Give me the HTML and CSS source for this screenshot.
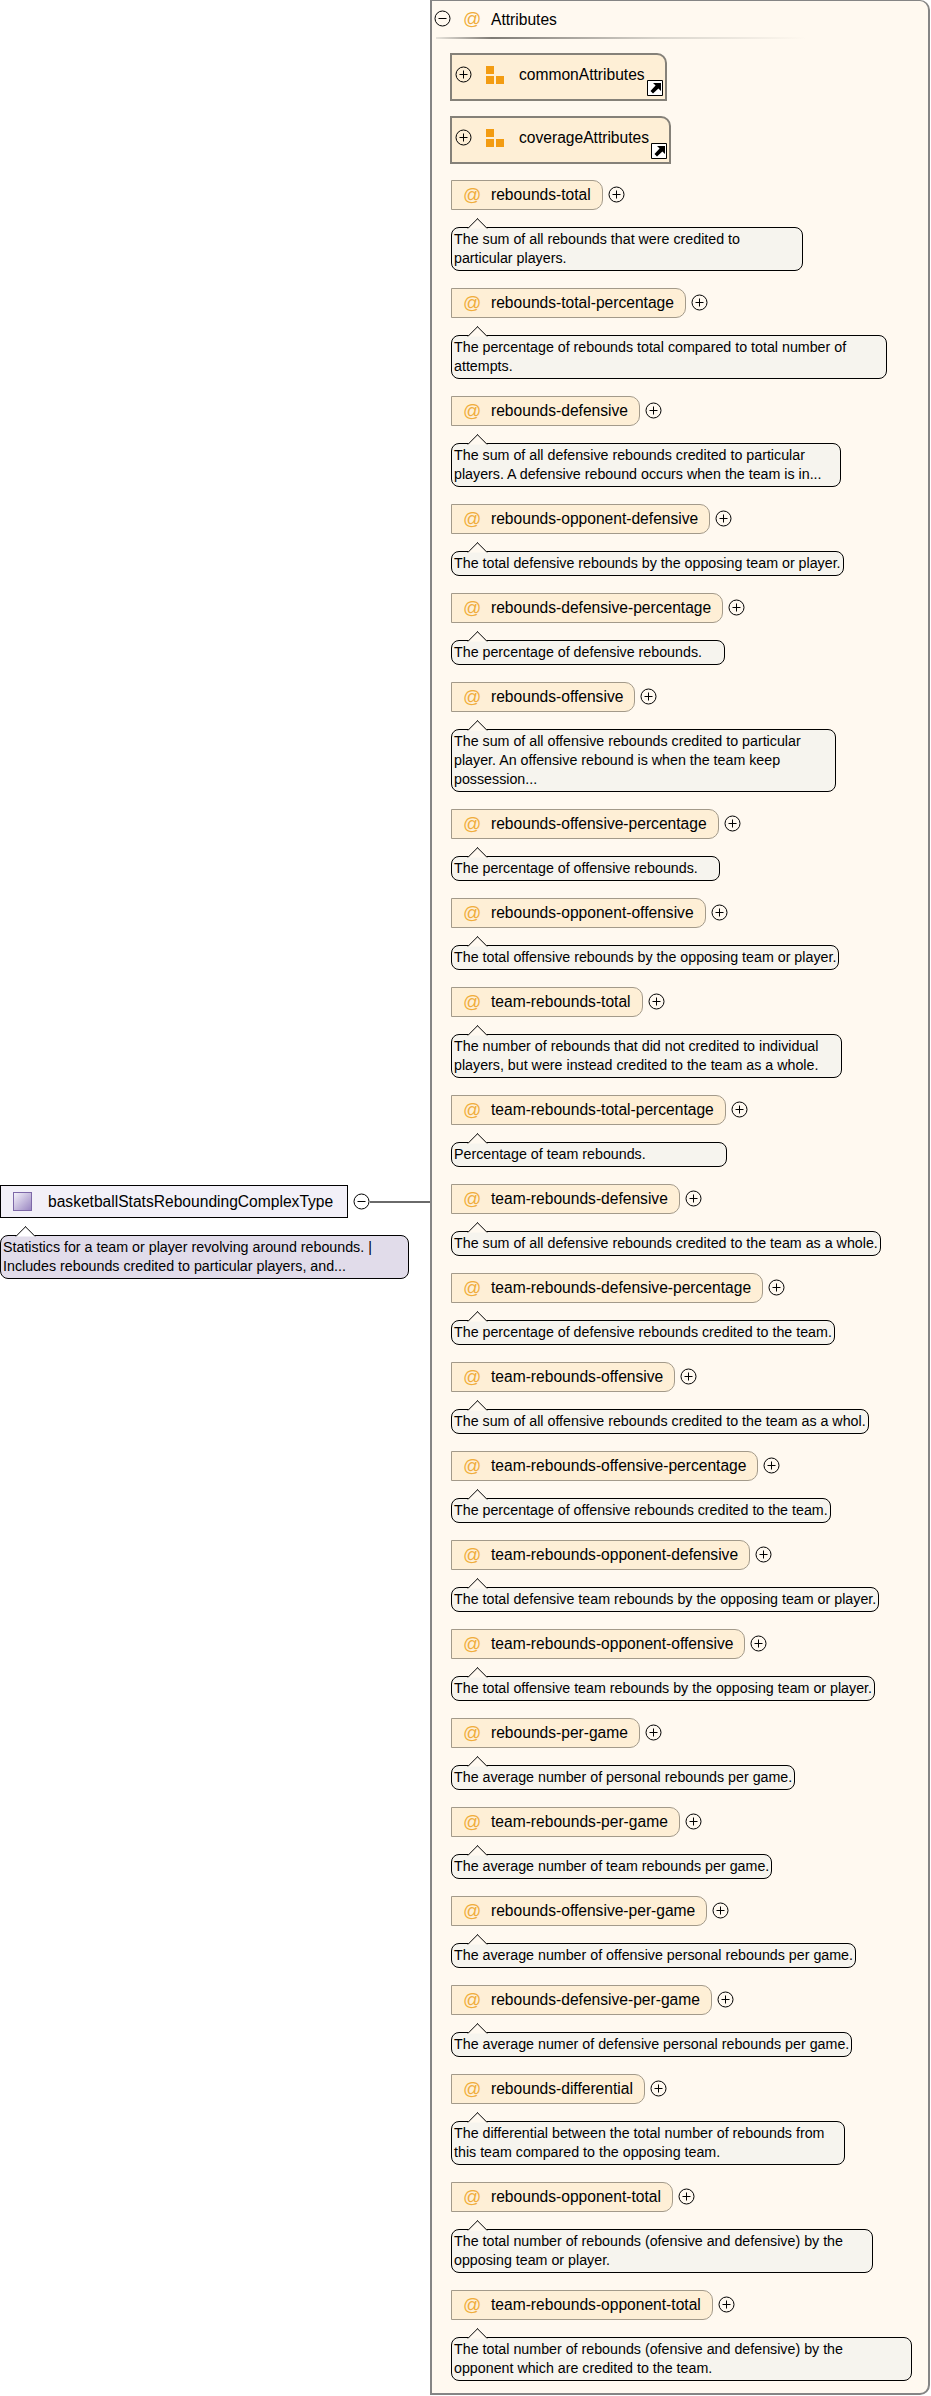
FILE: index.html
```html
<!DOCTYPE html>
<html lang="en">
<head>
<meta charset="utf-8">
<title>basketballStatsReboundingComplexType</title>
<link rel="stylesheet" href="styles.css">
</head>
<body>
<svg class="defs" width="0" height="0" aria-hidden="true">
  <symbol id="plus" viewBox="0 0 17 17"><circle cx="8.5" cy="8.5" r="7.5" fill="#fff" fill-opacity="0" stroke="#000"/><path d="M4.5 8.5h8M8.5 4.5v8" stroke="#000" fill="none"/></symbol>
  <symbol id="minus" viewBox="0 0 17 17"><circle cx="8.5" cy="8.5" r="7.5" fill="#fff" fill-opacity="0" stroke="#000"/><path d="M4.5 8.5h8" stroke="#000" fill="none"/></symbol>
  <symbol id="group" viewBox="0 0 18 18"><path d="M0 0h8v8H0zM0 10h8v8H0zM10 10h8v8h-8z" fill="#f39c12"/></symbol>
  <symbol id="link" viewBox="0 0 16 16"><path d="M.5.5h15v15H.5z" fill="#fff" stroke="#000"/><path d="M6 3h8v8l-2.6-2.6L6 13.5 3.5 11l5.1-5.4z" fill="#000"/></symbol>
</svg>
<main class="diagram">
  <section class="type">
    <div class="type-row">
      <div class="type-box"><span class="type-icon"></span><span class="type-name">basketballStatsReboundingComplexType</span></div>
      <svg class="toggle"><use href="#minus"/></svg>
      <span class="connector"></span>
    </div>
    <p class="note note-type">Statistics for a team or player revolving around rebounds. | Includes rebounds credited to particular players, and...</p>
  </section>
  <section class="panel">
    <header class="panel-head">
      <svg class="toggle"><use href="#minus"/></svg>
      <span class="at">@</span>
      <span class="panel-title">Attributes</span>
    </header>
    <div class="groups">
      <div class="group"><svg class="toggle"><use href="#plus"/></svg><svg class="group-icon"><use href="#group"/></svg><span>commonAttributes</span><svg class="link"><use href="#link"/></svg></div>
      <div class="group"><svg class="toggle"><use href="#plus"/></svg><svg class="group-icon"><use href="#group"/></svg><span>coverageAttributes</span><svg class="link"><use href="#link"/></svg></div>
    </div>
    <article class="attr"><div class="attr-row"><div class="attr-name"><span class="at">@</span><span>rebounds-total</span></div><svg class="toggle"><use href="#plus"/></svg></div><p class="note w-352">The sum of all rebounds that were credited to particular players.</p></article>
    <article class="attr"><div class="attr-row"><div class="attr-name"><span class="at">@</span><span>rebounds-total-percentage</span></div><svg class="toggle"><use href="#plus"/></svg></div><p class="note w-436">The percentage of rebounds total compared to total number of attempts.</p></article>
    <article class="attr"><div class="attr-row"><div class="attr-name"><span class="at">@</span><span>rebounds-defensive</span></div><svg class="toggle"><use href="#plus"/></svg></div><p class="note w-390">The sum of all defensive rebounds credited to particular players. A defensive rebound occurs when the team is in...</p></article>
    <article class="attr"><div class="attr-row"><div class="attr-name"><span class="at">@</span><span>rebounds-opponent-defensive</span></div><svg class="toggle"><use href="#plus"/></svg></div><p class="note">The total defensive rebounds by the opposing team or player.</p></article>
    <article class="attr"><div class="attr-row"><div class="attr-name"><span class="at">@</span><span>rebounds-defensive-percentage</span></div><svg class="toggle"><use href="#plus"/></svg></div><p class="note w-274">The percentage of defensive rebounds.</p></article>
    <article class="attr"><div class="attr-row"><div class="attr-name"><span class="at">@</span><span>rebounds-offensive</span></div><svg class="toggle"><use href="#plus"/></svg></div><p class="note w-385">The sum of all offensive rebounds credited to particular player. An offensive rebound is when the team keep possession...</p></article>
    <article class="attr"><div class="attr-row"><div class="attr-name"><span class="at">@</span><span>rebounds-offensive-percentage</span></div><svg class="toggle"><use href="#plus"/></svg></div><p class="note w-269">The percentage of offensive rebounds.</p></article>
    <article class="attr"><div class="attr-row"><div class="attr-name"><span class="at">@</span><span>rebounds-opponent-offensive</span></div><svg class="toggle"><use href="#plus"/></svg></div><p class="note">The total offensive rebounds by the opposing team or player.</p></article>
    <article class="attr"><div class="attr-row"><div class="attr-name"><span class="at">@</span><span>team-rebounds-total</span></div><svg class="toggle"><use href="#plus"/></svg></div><p class="note w-391">The number of rebounds that did not credited to individual players, but were instead credited to the team as a whole.</p></article>
    <article class="attr"><div class="attr-row"><div class="attr-name"><span class="at">@</span><span>team-rebounds-total-percentage</span></div><svg class="toggle"><use href="#plus"/></svg></div><p class="note w-276">Percentage of team rebounds.</p></article>
    <article class="attr"><div class="attr-row"><div class="attr-name"><span class="at">@</span><span>team-rebounds-defensive</span></div><svg class="toggle"><use href="#plus"/></svg></div><p class="note">The sum of all defensive rebounds credited to the team as a whole.</p></article>
    <article class="attr"><div class="attr-row"><div class="attr-name"><span class="at">@</span><span>team-rebounds-defensive-percentage</span></div><svg class="toggle"><use href="#plus"/></svg></div><p class="note">The percentage of defensive rebounds credited to the team.</p></article>
    <article class="attr"><div class="attr-row"><div class="attr-name"><span class="at">@</span><span>team-rebounds-offensive</span></div><svg class="toggle"><use href="#plus"/></svg></div><p class="note">The sum of all offensive rebounds credited to the team as a whol.</p></article>
    <article class="attr"><div class="attr-row"><div class="attr-name"><span class="at">@</span><span>team-rebounds-offensive-percentage</span></div><svg class="toggle"><use href="#plus"/></svg></div><p class="note">The percentage of offensive rebounds credited to the team.</p></article>
    <article class="attr"><div class="attr-row"><div class="attr-name"><span class="at">@</span><span>team-rebounds-opponent-defensive</span></div><svg class="toggle"><use href="#plus"/></svg></div><p class="note">The total defensive team rebounds by the opposing team or player.</p></article>
    <article class="attr"><div class="attr-row"><div class="attr-name"><span class="at">@</span><span>team-rebounds-opponent-offensive</span></div><svg class="toggle"><use href="#plus"/></svg></div><p class="note">The total offensive team rebounds by the opposing team or player.</p></article>
    <article class="attr"><div class="attr-row"><div class="attr-name"><span class="at">@</span><span>rebounds-per-game</span></div><svg class="toggle"><use href="#plus"/></svg></div><p class="note">The average number of personal rebounds per game.</p></article>
    <article class="attr"><div class="attr-row"><div class="attr-name"><span class="at">@</span><span>team-rebounds-per-game</span></div><svg class="toggle"><use href="#plus"/></svg></div><p class="note">The average number of team rebounds per game.</p></article>
    <article class="attr"><div class="attr-row"><div class="attr-name"><span class="at">@</span><span>rebounds-offensive-per-game</span></div><svg class="toggle"><use href="#plus"/></svg></div><p class="note">The average number of offensive personal rebounds per game.</p></article>
    <article class="attr"><div class="attr-row"><div class="attr-name"><span class="at">@</span><span>rebounds-defensive-per-game</span></div><svg class="toggle"><use href="#plus"/></svg></div><p class="note">The average numer of defensive personal rebounds per game.</p></article>
    <article class="attr"><div class="attr-row"><div class="attr-name"><span class="at">@</span><span>rebounds-differential</span></div><svg class="toggle"><use href="#plus"/></svg></div><p class="note w-394">The differential between the total number of rebounds from this team compared to the opposing team.</p></article>
    <article class="attr"><div class="attr-row"><div class="attr-name"><span class="at">@</span><span>rebounds-opponent-total</span></div><svg class="toggle"><use href="#plus"/></svg></div><p class="note w-422">The total number of rebounds (ofensive and defensive) by the opposing team or player.</p></article>
    <article class="attr"><div class="attr-row"><div class="attr-name"><span class="at">@</span><span>team-rebounds-opponent-total</span></div><svg class="toggle"><use href="#plus"/></svg></div><p class="note w-461">The total number of rebounds (ofensive and defensive) by the<br>opponent which are credited to the team.</p></article>
  </section>
</main>
</body>
</html>
```
FILE: styles.css
```css
html, body { margin: 0; padding: 0; background: #fff; }
body {
  width: 931px;
  height: 2396px;
  overflow: hidden;
  font-family: "Liberation Sans", Arial, sans-serif;
  color: #000;
}
.defs { position: absolute; }
.diagram { display: flex; align-items: flex-start; height: 2396px; }

.type { width: 430px; flex: none; padding-top: 1185px; box-sizing: border-box; }
.type-row { display: flex; align-items: center; }
.type-box {
  display: flex;
  align-items: center;
  box-sizing: border-box;
  width: 348px;
  height: 33px;
  padding-left: 12px;
  background: #f2f0f8;
  border: 1px solid #000;
  font-size: 15.6px;
}
.type-icon {
  width: 17px;
  height: 17px;
  margin-right: 16px;
  border: 1px solid #7d68a8;
  background: linear-gradient(135deg, #f4f2fa, #9a87c2);
}
.toggle { width: 17px; height: 17px; flex: none; display: block; }
.type-row .toggle { margin-left: 5px; }
.connector { flex: 1; height: 2px; background: #6a6a6a; }

.note {
  position: relative;
  box-sizing: border-box;
  width: fit-content;
  margin: 17px 0 0;
  padding: 2px;
  background: #f6f4ee;
  border: 1px solid #000;
  border-radius: 8px;
  font-size: 14.25px;
  line-height: 19px;
}
.note::before {
  content: "";
  position: absolute;
  left: 17.5px;
  top: -7.5px;
  width: 15px;
  height: 15px;
  box-sizing: border-box;
  background: #fff9f0;
  border-left: 1px solid #000;
  border-top: 1px solid #000;
  transform: rotate(45deg);
  clip-path: polygon(0 0, 100% 0, 0 100%);
}
.note-type { width: 409px; background: #e1dcea; }
.note-type::before { background: #fff; left: 17px; }
.w-352 { width: 352px; }
.w-436 { width: 436px; }
.w-390 { width: 390px; }
.w-274 { width: 274px; }
.w-385 { width: 385px; }
.w-269 { width: 269px; }
.w-391 { width: 391px; }
.w-276 { width: 276px; }
.w-394 { width: 394px; }
.w-422 { width: 422px; }
.w-461 { width: 461px; }

.panel {
  box-sizing: border-box;
  width: 500px;
  height: 2395px;
  flex: none;
  padding: 0 0 0 19px;
  background: #fff9f0;
  border: 2px solid #858585;
  border-top-width: 1px;
  border-radius: 0 10px 10px 0;
  font-size: 15.6px;
}
.at { color: #f0ad3c; font-size: 18px; width: 28px; flex: none; }
.panel-head {
  position: relative;
  display: flex;
  align-items: center;
  height: 37px;
  margin-left: -17px;
}
.panel-head .toggle { margin: 0 12px 2px 0; }
.panel-head::after {
  content: "";
  position: absolute;
  left: 2px;
  top: 36px;
  width: 370px;
  height: 2px;
  background: linear-gradient(90deg, #e8e4dc, #7f7b75 15%, #d8d4cc 60%, #fff9f0);
}

.groups { display: flex; flex-direction: column; align-items: flex-start; gap: 15px; padding-top: 15px; margin-left: -1px; }
.group {
  position: relative;
  display: flex;
  align-items: center;
  box-sizing: border-box;
  height: 48px;
  padding: 0 20px 5px 3px;
  background: #feefd6;
  border: 2px solid #858179;
  border-radius: 0 10px 0 0;
}
.group-icon { width: 18px; height: 18px; margin: 0 15px 0 14px; }
.link { position: absolute; right: 2px; bottom: 3px; width: 16px; height: 16px; }

.attr { margin-top: 16px; padding-bottom: 1px; }
.attr-row { display: flex; align-items: center; gap: 5px; }
.attr-row .toggle { margin-bottom: 2px; }
.attr-name {
  display: flex;
  align-items: center;
  box-sizing: border-box;
  height: 30px;
  padding: 0 11px;
  background: #feefd6;
  border: 1px solid #a39a8a;
  border-radius: 0 10px 10px 0;
}
```
